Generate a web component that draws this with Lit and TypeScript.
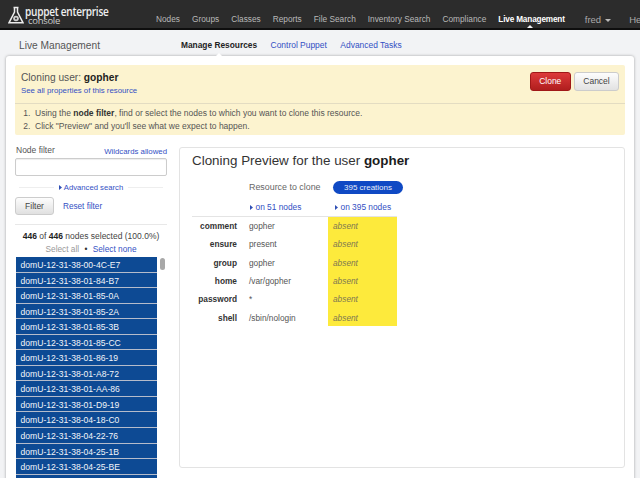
import { LitElement, html, css, svg } from "lit";
import { customElement } from "lit/decorators.js";

const NODES = ["00-4C-E7","01-84-B7","01-85-0A","01-85-2A","01-85-3B","01-85-CC","01-86-19","01-A8-72","01-AA-86","01-D9-19","04-18-C0","04-22-76","04-25-1B","04-25-BE"];
const ROWS = [["comment","gopher"],["ensure","present"],["group","gopher"],["home","/var/gopher"],["password","*"],["shell","/sbin/nologin"]];
const NAV = ["Nodes","Groups","Classes","Reports","File Search","Inventory Search","Compliance"];

const arrow = svg`<svg class="tri" width="3" height="5" viewBox="0 0 3 5"><path d="M0 0L3 2.5L0 5Z" fill="#2f4fb5"/></svg>`;

@customElement("app-root")
export class AppRoot extends LitElement {
  static styles = css`
    :host { display: block; width: 640px; height: 478px; overflow: hidden; background: #f2f3f5; font-family: "Liberation Sans", Arial, sans-serif; font-size: 9px; color: #444; }
    a { color: #3350c4; }
    .nav { height: 28px; background: #2c2c2c; border-bottom: 2px solid #0e0e0e; display: flex; align-items: flex-end; position: relative; overflow: hidden; }
    .logo { position: absolute; left: 8px; top: 5px; display: flex; gap: 1px; color: #eee; }
    .logo-text { display: flex; flex-direction: column; padding-top: 1px; }
    .logo-top { font-family: "Open Sans", sans-serif; font-size: 12px; font-weight: 600; letter-spacing: -.32px; line-height: 11px; color: #f0f0f0; white-space: nowrap; transform: scaleX(.84); transform-origin: left; }
    .logo-sub { font-family: "Open Sans", sans-serif; font-size: 9.500px; letter-spacing: -.3px; color: #ccc; line-height: 8px; margin-left: 3px; }
    .items { display: flex; margin-left: 156px; gap: 12px; padding-bottom: 3px; white-space: nowrap; color: #b9b9b9; font-size: 8.300px; line-height: 11px; }
    .items .cur { color: #fff; font-weight: 700; font-size: 8.200px; position: relative; letter-spacing: -.15px; }
    .cur::after { content: ""; position: absolute; left: 27px; bottom: -5px; border: 5px solid transparent; border-top: 0; border-bottom-color: #f2f3f5; }
    .fred { font-size: 9.500px; margin-left: 8px; color: #aaa; display: flex; align-items: center; gap: 4px; }
    .caret { border: 3px solid transparent; border-top-color: #bbb; border-bottom: 0; margin-top: 2px; }
    .help { margin-left: 6px; font-size: 9.500px; color: #aaa; }

    .sub { height: 25px; box-sizing: border-box; padding-top: 4px; display: flex; align-items: center; position: relative; }
    .sub h1 { margin: 1px 0 0 19px; width: 162px; font-weight: 400; font-size: 10.200px; color: #555; }
    .tabs { display: flex; gap: 13.500px; font-size: 8.450px; }
    .tabs a { text-decoration: none; }
    .tabs .on { color: #222; font-weight: 700; position: relative; font-size: 8.350px; }
    .on::after { content: ""; position: absolute; left: 33px; bottom: -8px; border: 5px solid transparent; border-top: 0; border-bottom-color: #fff; }

    .panel { margin: 1px 6px 0; height: 430px; background: #fff; border-radius: 3px 3px 0 0; box-shadow: 0 0 3px rgba(0,0,0,.35); padding: 9px 9px 0; box-sizing: border-box; }
    .notice { background: #fcf3cf; border-radius: 2px; height: 70px; box-sizing: border-box; }
    .notice-top { height: 39px; border-bottom: 1px solid #e3dcc2; display: flex; justify-content: space-between; padding: 6px 6px 0 6px; box-sizing: border-box; }
    .notice h2 { margin: 0; font-weight: 400; font-size: 10.200px; line-height: 14px; color: #555; }
    .notice h2 b { color: #222; }
    .notice-top a { font-size: 7.800px; text-decoration: none; display: block; line-height: 12px; }
    .btns { display: flex; gap: 3.500px; margin-top: 1px; }
    .btn { height: 18.500px; box-sizing: border-box; border-radius: 3px; font-size: 8.500px; line-height: 16.500px; text-align: center; }
    .clone { width: 40.500px; background: linear-gradient(#dd3a3a,#b01e1e); border: 1px solid #a01818; color: #fff; }
    .cancel { width: 45px; background: linear-gradient(#fdfdfd,#e2e2e2); border: 1px solid #ccc; color: #444; }
    .notice ol { margin: 0; padding: 3px 0 0 20px; font-size: 8.500px; line-height: 12.750px; color: #555; }
    .notice li::marker { content: counter(list-item) ".\\00a0\\00a0"; }
    .notice ol b { color: #333; }

    .cols { display: flex; margin-top: 12px; }
    .side { width: 152px; margin-right: 12px; flex: none; }
    .fl { display: flex; justify-content: space-between; align-items: flex-start; height: 11px; font-size: 8.500px; color: #555; }
    .fl span { line-height: 6px; margin-left: 1px; }
    .fl a { font-size: 7.800px; line-height: 10px; text-decoration: none; }
    .input { height: 18px; box-sizing: border-box; border: 1px solid #ccc; border-radius: 2px; background: #fff; box-shadow: inset 0 1px 1px #eee; }
    .adv { display: flex; align-items: center; gap: 5px; margin: 6px 4px 0; height: 10px; font-size: 7.700px; }
    .adv hr { flex: 1; border: 0; border-top: 1px solid #eee; margin: 0; }
    .adv a { text-decoration: none; display: flex; align-items: center; gap: 2px; }
    .fr { display: flex; align-items: center; gap: 9px; margin-top: 5px; padding-bottom: 9px; border-bottom: 1px solid #e8e8e8; font-size: 8.200px; }
    .fbtn { width: 39px; height: 18px; box-sizing: border-box; border: 1px solid #ccc; border-radius: 3px; background: linear-gradient(#fdfdfd,#e0e0e0); font-size: 8.500px; line-height: 16px; text-align: center; color: #444; }
    .fr a { text-decoration: none; }
    .count { text-align: center; font-size: 8.500px; line-height: 12px; margin-top: 5px; color: #444; }
    .count b { color: #222; }
    .sel { text-align: center; font-size: 8.300px; line-height: 12px; margin-top: 1px; color: #999; }
    .sel a { text-decoration: none; }
    .sel i { font-style: normal; color: #333; margin: 0 3px; }
    .listwrap { display: flex; margin-top: 2px; margin-left: 1px; gap: 3px; }
    .list { width: 141px; flex: none; height: 221px; background: #b5bccb; overflow: hidden; }
    .row { height: 14.560px; margin-bottom: 1px; padding-left: 4.500px; background: #0d4a94; color: #f2f5fa; font-size: 8.600px; line-height: 16px; }
    .thumb { width: 5px; height: 12px; background: #a8a8a8; border-radius: 3px; margin-top: 1px; }

    .preview { width: 449px; height: 321px; box-sizing: border-box; border: 1px solid #e3e3e3; border-radius: 3px; padding: 4px 12px; }
    .preview h3 { margin: 0; font-weight: 400; font-size: 13.400px; line-height: 17px; color: #333; }
    .preview h3 b { color: #1c1c1c; }
    .grid { display: grid; grid-template-columns: 57px 79px 69px; margin-top: 12px; }
    .res { font-size: 8.900px; color: #666; grid-column: 2; line-height: 13px; }
    .pill { width: 70px; height: 13px; box-sizing: border-box; border-radius: 7px; background: #0f49c4; color: #e8eefb; font-size: 8px; line-height: 13px; text-align: center; margin-left: 5px; }
    .on-n { font-size: 8.350px; height: 22px; box-sizing: border-box; padding: 4px 0 0 1px; display: flex; align-items: center; gap: 2.500px; }
    .on-n a { text-decoration: none; }
    .k, .v, .y { height: 18.330px; line-height: 20px; font-size: 8.300px; }
    .k { text-align: right; font-weight: 700; color: #333; padding-right: 12px; }
    .v { color: #555; }
    .y { background: #fdea3c; color: #7d7852; font-style: italic; padding-left: 5px; }
    .line { grid-column: 1 / 4; height: 1px; background: #e4e4e4; margin-bottom: -1px; position: relative; }
    .on-n.b { padding-left: 7px; }
  `;

  render() {
    return html`
      <div class="nav">
        <div class="logo">
          <svg width="16" height="20" viewBox="0 0 16 20"><path d="M5.500 2.500h5M6.500 2.500v4.500L1 17.800h14L9.500 7V2.500" fill="none" stroke="#ececec" stroke-width="1.500"/><circle cx="8" cy="13.500" r="2.800" fill="#cfcfcf"/><circle cx="8" cy="13.500" r="1" fill="#2c2c2c"/></svg>
          <div class="logo-text"><span class="logo-top">puppet enterprise</span><span class="logo-sub">console</span></div>
        </div>
        <div class="items">
          ${NAV.map((n) => html`<span>${n}</span>`)}
          <span class="cur">Live Management</span>
          <span class="fred">fred <span class="caret"></span></span>
          <span class="help">Help</span>
        </div>
      </div>
      <div class="sub">
        <h1>Live Management</h1>
        <div class="tabs"><a class="on">Manage Resources</a><a>Control Puppet</a><a>Advanced Tasks</a></div>
      </div>
      <div class="panel">
        <div class="notice">
          <div class="notice-top">
            <div>
              <h2>Cloning user: <b>gopher</b></h2>
              <a>See all properties of this resource</a>
            </div>
            <div class="btns"><div class="btn clone">Clone</div><div class="btn cancel">Cancel</div></div>
          </div>
          <ol>
            <li>Using the <b>node filter</b>, find or select the nodes to which you want to clone this resource.</li>
            <li>Click "Preview" and you'll see what we expect to happen.</li>
          </ol>
        </div>
        <div class="cols">
          <div class="side">
            <div class="fl"><span>Node filter</span><a>Wildcards allowed</a></div>
            <div class="input"></div>
            <div class="adv"><hr /><a>${arrow}Advanced search</a><hr /></div>
            <div class="fr"><div class="fbtn">Filter</div><a>Reset filter</a></div>
            <div class="count"><b>446</b> of <b>446</b> nodes selected (100.0%)</div>
            <div class="sel">Select all <i>•</i> <a>Select none</a></div>
            <div class="listwrap">
              <div class="list">${NODES.map((n) => html`<div class="row">domU-12-31-38-${n}</div>`)}<div class="row"></div></div>
              <div class="thumb"></div>
            </div>
          </div>
          <div class="preview">
            <h3>Cloning Preview for the user <b>gopher</b></h3>
            <div class="grid">
              <div></div><div class="res">Resource to clone</div><div class="pill">395 creations</div>
              <div></div>
              <div class="on-n">${arrow}<a>on 51 nodes</a></div>
              <div class="on-n b">${arrow}<a>on 395 nodes</a></div>
              <div class="line"></div>
              ${ROWS.map(([k, v]) => html`<div class="k">${k}</div><div class="v">${v}</div><div class="y">absent</div>`)}
            </div>
          </div>
        </div>
      </div>
    `;
  }
}
